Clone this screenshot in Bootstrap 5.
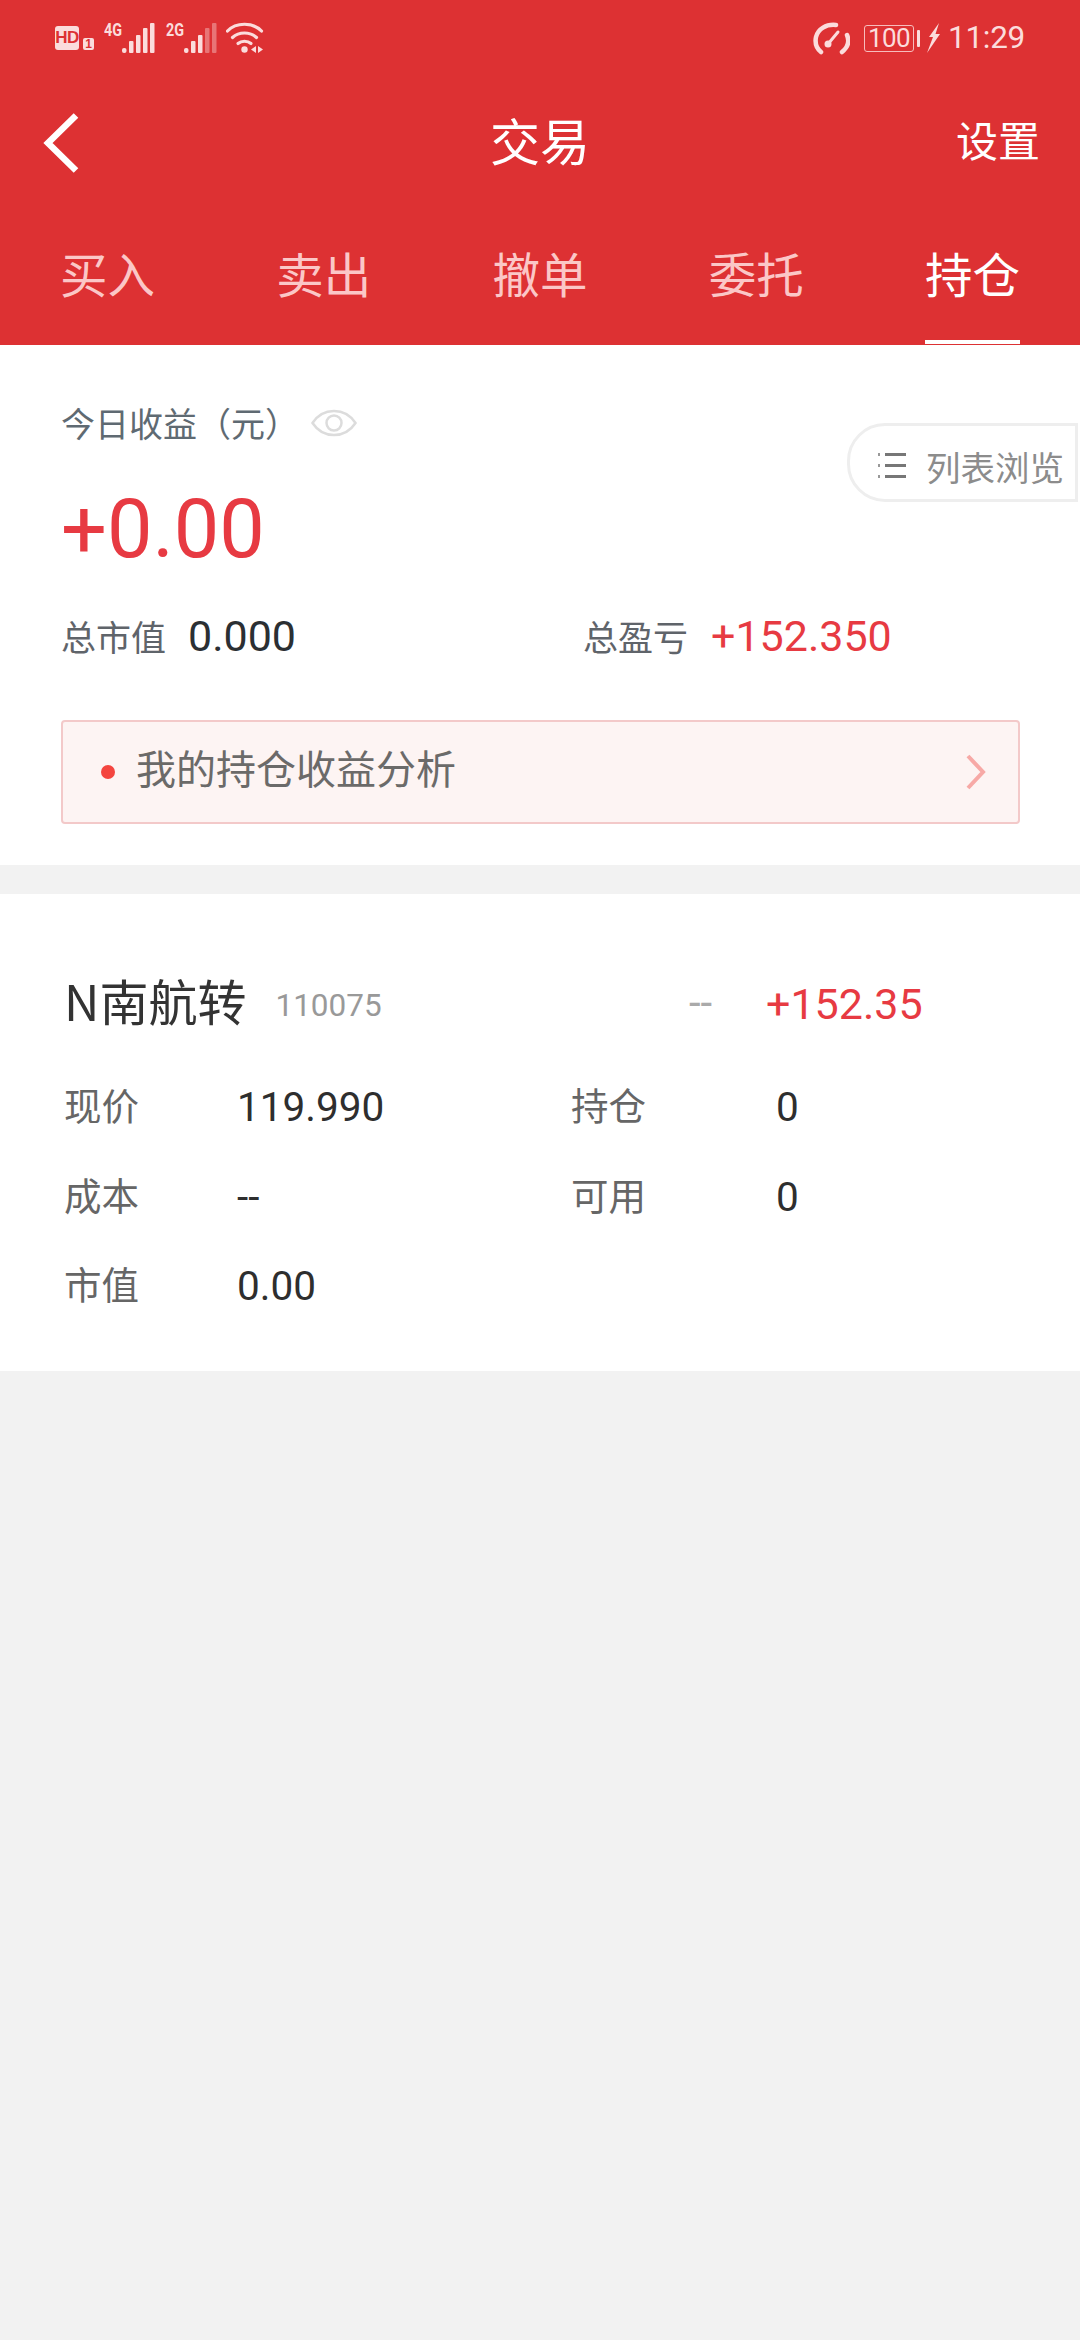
<!DOCTYPE html>
<html lang="zh-CN">
<head>
<meta charset="utf-8">
<title>交易</title>
<link rel="stylesheet" href="https://cdn.jsdelivr.net/npm/bootstrap@5.3.0/dist/css/bootstrap.min.css">
<style>
:root{--c:"Noto Sans CJK SC","Roboto",sans-serif;}
html,body{margin:0;width:1080px;height:2340px;background:#f2f2f2;overflow:hidden;font-family:var(--c);}
.hdr{background:#dd3133;color:#fff;height:345px;}
.sbar{height:76px;padding-left:55px;padding-right:55px;color:#fbdcdc;}
.hd-box{width:24px;height:24px;background:#fbdcdc;color:#dd3133;border-radius:3px;font:700 17px/24px "Liberation Sans",sans-serif;text-align:center;letter-spacing:-.5px;margin-top:-1px;}
.sim-box{width:11px;height:12px;background:#fbdcdc;color:#dd3133;border-radius:2px;font:700 12px/12px "Liberation Sans",sans-serif;text-align:center;margin-left:4px;margin-top:11px;}
.net{font:700 18px/15px "Roboto",sans-serif;width:18px;margin-left:10px;margin-top:-17px;transform:scaleX(.8);transform-origin:left;}
.net2{margin-left:11px;}
.sig{display:block;margin-right:0;}
.wifi{margin-left:9px;}
.gauge{margin-right:14px;}
.batt{width:50px;height:27px;border:1.5px solid #f7bcbc;border-radius:3px;font:400 26px/24px "Roboto",sans-serif;letter-spacing:-.5px;text-align:center;color:#fbdcdc;}
.nub{width:3px;height:17px;background:#fbdcdc;margin:0 7px 0 3px;border-radius:1px;}
.clock{font:400 31.500px/40px "Roboto",sans-serif;margin-left:8px;letter-spacing:-.3px;}
.topbar{height:134px;padding:0 40px 0 43px;position:relative;}
.ttl{position:absolute;left:0;right:0;top:0;line-height:126px;text-align:center;font-size:50px;font-weight:400;}
.setg{margin-left:auto;font-size:42px;line-height:126px;height:134px;position:relative;}
.back{position:relative;display:block;}
.tabs{height:135px;padding:0 60px 0 60px;}
.tabi{font-size:47.500px;line-height:126px;height:134px;color:#fbc7c7;}
.tabi.on{color:#fff;border-bottom:4px solid #fff;}
.summ{background:#fff;height:520px;padding:53px 60px 0 61px;position:relative;}
.lbl1{font-size:34px;line-height:50px;color:#5f6a72;}
.eye{margin-left:12px;}
.profit{font:400 81px/100px "Roboto",sans-serif;color:#e73a42;margin-top:32px;}
.totals{margin-top:31px;line-height:50px;}
.tl{font-size:35px;color:#5f646a;}
.tv{font:400 43px/50px "Roboto",sans-serif;color:#2b2f33;margin-left:22px;}
.tv.red{color:#e73a42;margin-left:23px;font-size:43px;}
.tot-a{width:522px;}
.anly{height:104px;margin-top:59px;background:#fdf4f3;border:2px solid #f3c9c9;border-radius:4px;padding:0 31px 0 38px;}
.dot1{width:14px;height:14px;border-radius:50%;background:#f4453f;margin-right:21px;}
.anly-t{font-size:40px;color:#6b6a69;padding-bottom:11px;line-height:50px;}
.pill{position:absolute;right:2px;top:78px;width:231px;height:79px;border:3px solid #eeeeee;border-radius:38px 0 0 38px;background:#fff;color:#8c8c8c;font-size:34.500px;padding-left:28px;padding-top:6px;}
.pill-t{padding-top:3px;margin-left:18px;white-space:nowrap;}
.stock{background:#fff;margin-top:29px;height:477px;padding:79px 64px 0;}
.sname{font-size:49px;line-height:54px;height:60px;color:#333;width:625px;}
.scode{font:400 31.500px/66px "Roboto",sans-serif;color:#999;margin-left:29px;}
.dash{font:400 42px/60px "Roboto",sans-serif;color:#aaa;width:77px;}
.pl{font:400 43px/62px "Roboto",sans-serif;color:#e73a42;}
.irows{margin-top:27px;}
.irow{height:89.5px;}
.k{font-size:37.500px;line-height:84px;color:#666;width:173px;}
.v{font:400 40.500px/90px "Roboto",sans-serif;color:#2e2e2e;}
.v1{width:334px;}
.k2{width:205px;}
</style>
</head>
<body>
<header class="hdr">
  <div class="sbar d-flex align-items-center">
    <span class="hd-box">HD</span><span class="sim-box">1</span>
    <span class="net">4G</span>
    <svg class="sig" width="33" height="30" viewBox="0 0 33 30" fill="#fbdcdc"><rect x="0" y="25" width="4.500" height="5" rx="2"/><rect x="7" y="18" width="4.500" height="12" rx="1"/><rect x="14" y="12" width="4.500" height="18" rx="1"/><rect x="21" y="5" width="4.500" height="25" rx="1"/><rect x="28" y="0" width="4.500" height="30" rx="1"/></svg>
    <span class="net net2">2G</span>
    <svg class="sig" width="33" height="30" viewBox="0 0 33 30" fill="#fbdcdc"><rect x="0" y="25" width="4.500" height="5" rx="2"/><rect x="7" y="18" width="4.500" height="12" rx="1"/><rect x="14" y="12" width="4.500" height="18" rx="1"/><rect x="21" y="5" width="4.500" height="25" rx="1" opacity=".4"/><rect x="28" y="0" width="4.500" height="30" rx="1" opacity=".4"/></svg>
    <svg class="wifi" width="38" height="32" viewBox="0 0 38 32" fill="none" stroke="#fbdcdc" stroke-width="3.200" stroke-linecap="round"><path d="M1.500 9C10 0 27 0 35.500 9"/><path d="M6.500 15.500C13 9.500 24 9.500 30.500 15.500"/><path d="M12 21.500C15.500 18.500 21.500 18.500 25 21.500"/><circle cx="18.500" cy="27.500" r="3.200" fill="#fbdcdc" stroke="none"/><path d="M30 24v7l-5-3.500zM32 24v7l5-3.500z" fill="#fbdcdc" stroke="none"/></svg>
    <span class="ms-auto"></span>
    <svg class="gauge" width="37" height="33" viewBox="0 0 37 33" fill="none" stroke="#fbdcdc" stroke-width="4.500" stroke-linecap="round"><path d="M8 30C3 26 2 20 3 15C5 7 13 2 23 3"/><path d="M34 13C37 20 34 26 29 30"/><path d="M15 22L25 10" stroke-width="3"/><circle cx="15" cy="22" r="3.500" fill="#fbdcdc" stroke="none"/></svg>
    <span class="batt">100</span><span class="nub"></span>
    <svg width="13" height="30" viewBox="0 0 13 30" fill="#fbdcdc"><path d="M12 0L2 14h4L0 30 13 11H8.500z"/></svg>
    <span class="clock">11:29</span>
  </div>
  <div class="topbar d-flex align-items-center">
    <span class="ttl">交易</span>
    <svg class="back" width="36" height="60" viewBox="0 0 36 60" fill="none" stroke="#fff" stroke-width="6.500"><path d="M33 2.500L5 30l28 27.500"/></svg>
    <span class="setg">设置</span>
  </div>
  <nav class="tabs d-flex justify-content-between">
    <span class="tabi">买入</span><span class="tabi">卖出</span><span class="tabi">撤单</span><span class="tabi">委托</span><span class="tabi on">持仓</span>
  </nav>
</header>
<section class="summ">
  <div class="lbl1 d-flex align-items-center">今日收益（元）
    <svg class="eye" width="46" height="30" viewBox="0 0 46 30" fill="none" stroke="#dcdcdc" stroke-width="2.500"><path d="M1.500 15C12 -1 34 -1 44.500 15C34 31 12 31 1.500 15Z"/><circle cx="23" cy="15" r="7.500"/></svg>
  </div>
  <div class="profit">+0.00</div>
  <div class="totals d-flex align-items-center">
    <div class="tot-a d-flex align-items-center"><span class="tl">总市值</span><span class="tv">0.000</span></div>
    <div class="d-flex align-items-center"><span class="tl">总盈亏</span><span class="tv red">+152.350</span></div>
  </div>
  <div class="anly d-flex align-items-center">
    <span class="dot1"></span><span class="anly-t">我的持仓收益分析</span>
    <svg class="ms-auto" width="22" height="36" viewBox="0 0 22 36" fill="none" stroke="#f7a9a6" stroke-width="4"><path d="M3 2l15 16L3 34"/></svg>
  </div>
  <div class="pill d-flex align-items-center">
    <svg width="30" height="28" viewBox="0 0 30 28" fill="#777"><rect x="0" y="1" width="2" height="3" fill="#999"/><rect x="0" y="12" width="2" height="3" fill="#999"/><rect x="0" y="23" width="2" height="3" fill="#999"/><rect x="7" y="1" width="21" height="3"/><rect x="7" y="12" width="21" height="3"/><rect x="7" y="23" width="21" height="3"/></svg>
    <span class="pill-t">列表浏览</span>
  </div>
</section>
<section class="stock">
  <div class="d-flex">
    <div class="sname d-flex">N南航转<span class="scode">110075</span></div>
    <span class="dash">--</span><span class="pl">+152.35</span>
  </div>
  <div class="irows">
    <div class="irow d-flex"><span class="k">现价</span><span class="v v1">119.990</span><span class="k k2">持仓</span><span class="v">0</span></div>
    <div class="irow d-flex"><span class="k">成本</span><span class="v v1">--</span><span class="k k2">可用</span><span class="v">0</span></div>
    <div class="irow d-flex"><span class="k">市值</span><span class="v v1">0.00</span></div>
  </div>
</section>
<script src="https://cdn.jsdelivr.net/npm/bootstrap@5.3.0/dist/js/bootstrap.bundle.min.js"></script>
</body>
</html>
